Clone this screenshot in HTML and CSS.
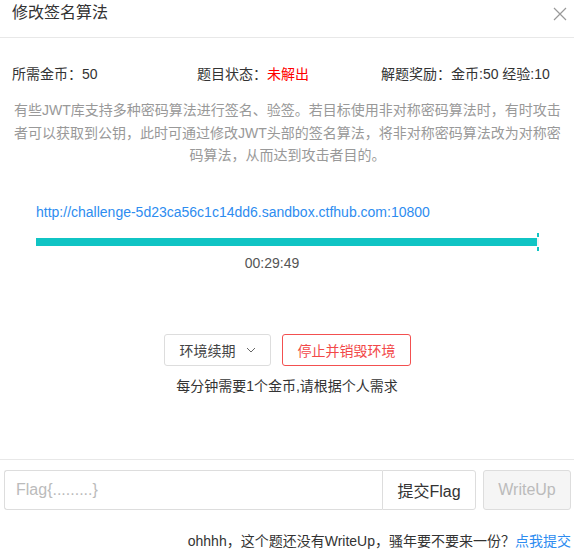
FILE: index.html
```html
<!DOCTYPE html>
<html lang="zh">
  <head>
    <meta charset="UTF-8" />
    <meta name="viewport" content="width=device-width, initial-scale=1.0" />
    <title>修改签名算法</title>
    <link rel="stylesheet" href="styles.css">
  </head>
  <body>
    <div class="modal">
      <div class="modal-header">
        <span class="modal-title">修改签名算法</span>
        <svg class="close" width="14" height="14" viewBox="0 0 14 14">
          <path d="M1 1L13 13M13 1L1 13" stroke="#999" stroke-width="1.2" fill="none" />
        </svg>
      </div>

      <div class="info-row">
        <div>所需金币：50</div>
        <div>题目状态：<span class="unsolved">未解出</span></div>
        <div>解题奖励：金币:50 经验:10</div>
      </div>

      <p class="desc">有些JWT库支持多种密码算法进行签名、验签。若目标使用非对称密码算法时，有时攻击者可以获取到公钥，此时可通过修改JWT头部的签名算法，将非对称密码算法改为对称密码算法，从而达到攻击者目的。</p>

      <div class="env">
        <a class="env-url" href="#">http://challenge-5d23ca56c1c14dd6.sandbox.ctfhub.com:10800</a>
        <div class="progress">
          <div class="progress-bar" style="width: 99.6%"></div>
          <div class="progress-tick"></div>
        </div>
        <div class="timer">00:29:49</div>
      </div>

      <div class="actions">
        <button class="btn-renew">环境续期
          <svg width="10" height="6" viewBox="0 0 10 6">
            <path d="M1 1L5 5L9 1" stroke="#666" stroke-width="1" fill="none" />
          </svg>
        </button>
        <button class="btn-stop">停止并销毁环境</button>
      </div>
      <div class="note">每分钟需要1个金币,请根据个人需求</div>

      <div class="flag-area">
        <div class="flag-row">
          <div class="flag-group">
            <input type="text" placeholder="Flag{.........}" />
            <button class="btn-submit">提交Flag</button>
          </div>
          <button class="btn-writeup" disabled>WriteUp</button>
        </div>
        <div class="footer-note">ohhhh，这个题还没有WriteUp，骚年要不要来一份？<a href="#">点我提交</a></div>
      </div>
    </div>
  </body>
</html>
```

FILE: styles.css
```css
body {
  font-family: "Liberation Sans", "Noto Sans CJK TC", sans-serif;
  background-color: #fff;
  margin: 0;
  color: #333;
}
.modal {
  width: 574px;
  height: 553px;
  overflow: hidden;
}
.modal-header {
  height: 38px;
  box-sizing: border-box;
  padding: 1px 7px 0 12px;
  border-bottom: 1px solid #e8e8e8;
  display: flex;
  justify-content: space-between;
}
.modal-title {
  font-size: 16px;
  line-height: 24px;
  color: #333;
}
.close {
  margin-top: 6px;
}
.info-row {
  display: grid;
  grid-template-columns: 185px 184px 1fr;
  padding: 0 12px;
  margin-top: 26px;
  font-size: 14px;
  line-height: 20px;
  color: #333;
}
.unsolved {
  color: #f00;
}
.desc {
  margin: 15px 12px 0 13px;
  font-size: 14px;
  line-height: 22.5px;
  color: #999;
  text-align: center;
}
.env {
  padding: 0 36px;
  margin-top: 35px;
}
.env-url {
  display: block;
  font-size: 14px;
  line-height: 20px;
  color: #2d8cf0;
  text-decoration: none;
}
.progress {
  position: relative;
  margin-top: 16px;
  height: 8px;
  background-color: #f3f3f3;
  width: 503px;
}
.progress-bar {
  height: 8px;
  background-color: #10c4c4;
}
.progress-tick {
  position: absolute;
  right: 0;
  top: -5px;
  width: 2px;
  height: 18px;
  background: linear-gradient(#10c4c4 0, #10c4c4 4px, transparent 4px, transparent 14px, #10c4c4 14px);
}
.timer {
  margin-top: 8px;
  margin-right: 30px;
  text-align: center;
  font-size: 14px;
  line-height: 18px;
  color: #555;
}
.actions {
  display: flex;
  justify-content: center;
  gap: 11px;
  margin-top: 62px;
  padding-left: 1px;
}
button {
  font-family: inherit;
  cursor: pointer;
}
.btn-renew {
  width: 107px;
  height: 32px;
  border: 1px solid #ddd;
  border-radius: 3px;
  background-color: #fff;
  font-size: 14px;
  color: #444;
  display: flex;
  align-items: center;
  justify-content: center;
  gap: 10px;
}
.btn-stop {
  width: 129px;
  height: 32px;
  border: 1px solid #f35050;
  border-radius: 3px;
  background-color: #fff;
  font-size: 14px;
  color: #f24848;
}
.note {
  text-align: center;
  font-size: 14px;
  line-height: 20px;
  color: #333;
  margin-top: 10px;
}
.flag-area {
  margin-top: 63px;
  border-top: 1px solid #e8e8e8;
  padding: 10px 3px 0 4px;
}
.flag-row {
  display: flex;
  gap: 7px;
}
.flag-group {
  display: flex;
  flex: 1;
  height: 40px;
}
.flag-group input {
  flex: 1;
  min-width: 0;
  box-sizing: border-box;
  height: 40px;
  border: 1px solid #ddd;
  border-right: none;
  border-radius: 3px 0 0 3px;
  padding: 0 11px;
  font-size: 16px;
  font-family: inherit;
  color: #333;
  outline: none;
}
.flag-group input::placeholder {
  color: #bbb;
}
.btn-submit {
  width: 94px;
  height: 40px;
  border: 1px solid #ddd;
  border-radius: 0 3px 3px 0;
  background-color: #fff;
  font-size: 16px;
  color: #333;
}
.btn-writeup {
  width: 88px;
  height: 40px;
  border: 1px solid #ddd;
  border-radius: 3px;
  background-color: #f5f5f5;
  font-size: 16px;
  color: #bbb;
  cursor: not-allowed;
}
.footer-note {
  text-align: right;
  margin-top: 21px;
  font-size: 14px;
  line-height: 20px;
  color: #333;
}
.footer-note a {
  color: #2d8cf0;
  text-decoration: none;
}
```
